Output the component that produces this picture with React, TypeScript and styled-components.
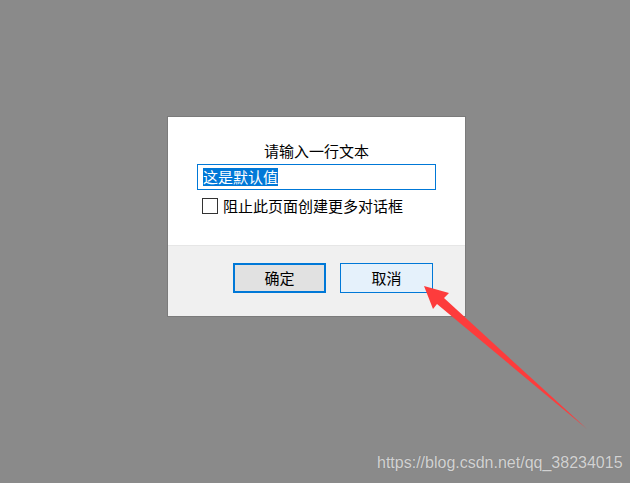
import React from "react";
import styled, { createGlobalStyle } from "styled-components";

const GlobalStyle = createGlobalStyle`
  html, body {
    margin: 0;
    padding: 0;
    background: #8a8a8a;
  }
`;

const Page = styled.div`
  position: relative;
  width: 630px;
  height: 483px;
  box-sizing: border-box;
  padding: 116px 0 0 167px;
  background: #8a8a8a;
  overflow: hidden;
  font-family: "Noto Sans CJK SC", "Microsoft YaHei", sans-serif;
`;

const Dialog = styled.div`
  width: 299px;
  box-sizing: border-box;
  border: 1px solid #7b7b7b;
  background: #fff;
  display: flex;
  flex-direction: column;
`;

const Body = styled.div`
  height: 128px;
  box-sizing: border-box;
  padding: 24px 29px 0 29px;
  display: flex;
  flex-direction: column;
`;

const Title = styled.div`
  font-size: 15px;
  line-height: 20px;
  height: 20px;
  text-align: center;
  color: #000;
`;

const Input = styled.div`
  margin-top: 3px;
  height: 26px;
  box-sizing: border-box;
  border: 1px solid #0078d7;
  padding: 2px 5px;
  display: flex;
  align-items: center;
`;

const Selected = styled.span`
  background: #0078d7;
  color: #fff;
  font-size: 15px;
  line-height: 18px;
  height: 18px;
`;

const CheckRow = styled.label`
  margin-top: 7px;
  height: 18px;
  padding-left: 5px;
  display: flex;
  align-items: center;
  gap: 5px;
  font-size: 15px;
  line-height: 18px;
  color: #000;
`;

const Box = styled.span`
  width: 16px;
  height: 16px;
  box-sizing: border-box;
  border: 1.5px solid #333;
  background: #fff;
  flex: none;
`;

const Footer = styled.div`
  height: 71px;
  box-sizing: border-box;
  background: #f0f0f0;
  border-top: 1px solid #e6e6e6;
  padding: 17px 32px 0 0;
  display: flex;
  justify-content: flex-end;
  align-items: flex-start;
  gap: 14px;
`;

const Button = styled.button<{ $primary?: boolean }>`
  width: 93px;
  height: 30px;
  box-sizing: border-box;
  margin: 0;
  padding: 0;
  border: ${(p) => (p.$primary ? "2px" : "1px")} solid #0078d7;
  background: ${(p) => (p.$primary ? "#e1e1e1" : "#e5f1fb")};
  font-family: inherit;
  font-size: 15px;
  line-height: 18px;
  color: #000;
`;

const Arrow = styled.svg`
  position: absolute;
  left: 0;
  top: 0;
  pointer-events: none;
`;

const Watermark = styled.div`
  position: absolute;
  left: 377px;
  top: 453px;
  font-family: "Liberation Sans", Arial, sans-serif;
  font-size: 16px;
  line-height: 20px;
  color: #d2d2d2;
  text-shadow: 0 0 1px rgba(0, 0, 0, 0.15);
`;

function App() {
  return (
    <Page>
      <GlobalStyle />
      <Dialog>
        <Body>
          <Title>请输入一行文本</Title>
          <Input>
            <Selected>这是默认值</Selected>
          </Input>
          <CheckRow>
            <Box />
            阻止此页面创建更多对话框
          </CheckRow>
        </Body>
        <Footer>
          <Button $primary>确定</Button>
          <Button>取消</Button>
        </Footer>
      </Dialog>
      <Arrow width="630" height="483" viewBox="0 0 630 483">
        <polygon
          points="424,286 449,293 444,298 587,429 437,304 433,309"
          fill="#fd3c3c"
        />
      </Arrow>
      <Watermark>https://blog.csdn.net/qq_38234015</Watermark>
    </Page>
  );
}

export default App;
